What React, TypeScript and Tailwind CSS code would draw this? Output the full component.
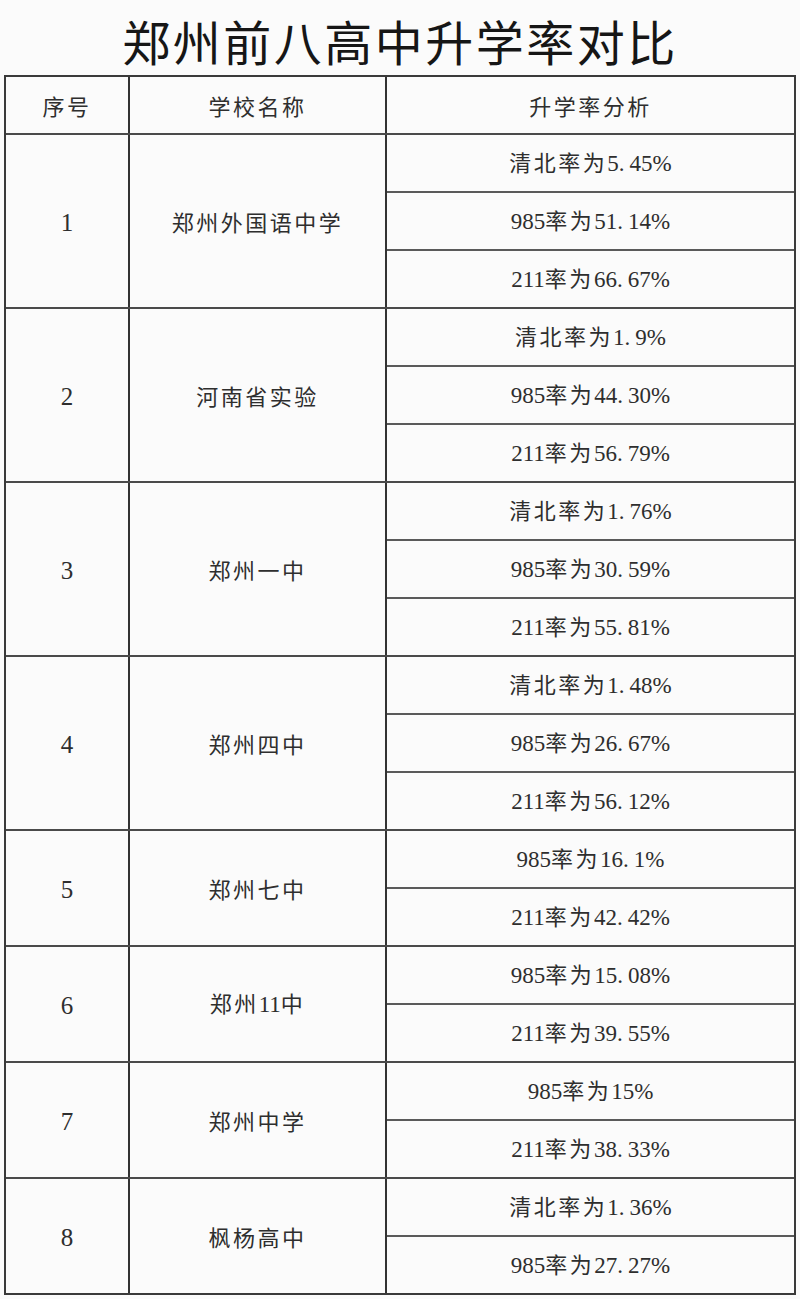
import React from "react";

type Group = { no: string; name: string; rates: string[] };

const groups: Group[] = [
  { no: "1", name: "郑州外国语中学", rates: ["清北率为5.45%", "985率为51.14%", "211率为66.67%"] },
  { no: "2", name: "河南省实验", rates: ["清北率为1.9%", "985率为44.30%", "211率为56.79%"] },
  { no: "3", name: "郑州一中", rates: ["清北率为1.76%", "985率为30.59%", "211率为55.81%"] },
  { no: "4", name: "郑州四中", rates: ["清北率为1.48%", "985率为26.67%", "211率为56.12%"] },
  { no: "5", name: "郑州七中", rates: ["985率为16.1%", "211率为42.42%"] },
  { no: "6", name: "郑州11中", rates: ["985率为15.08%", "211率为39.55%"] },
  { no: "7", name: "郑州中学", rates: ["985率为15%", "211率为38.33%"] },
  { no: "8", name: "枫杨高中", rates: ["清北率为1.36%", "985率为27.27%"] },
];

function Txt({ text }: { text: string }) {
  const parts = text.split(/([\u4e00-\u9fff]+)/).filter((p) => p.length > 0);
  return (
    <span className="whitespace-nowrap">
      {parts.map((p, i) => {
        if (/[\u4e00-\u9fff]/.test(p)) {
          return (
            <span key={i} className="tracking-[2.5px]">
              {p}
            </span>
          );
        }
        const segs = p.split(".");
        return (
          <span key={i} className="font-['Liberation_Serif',serif] text-[23px]">
            {segs.map((s, j) => (
              <React.Fragment key={j}>
                {j > 0 && <span className="pr-[5px]">.</span>}
                {s}
              </React.Fragment>
            ))}
          </span>
        );
      })}
    </span>
  );
}

export default function App() {
  return (
    <div className="w-[800px] h-[1299px] bg-[#fbfbfb] text-[#2e2e2e] font-['Noto_Sans_CJK_SC',sans-serif] overflow-hidden">
      <div className="h-[75px] flex items-center justify-center">
        <h1 className="text-[48px] leading-none tracking-[2.5px] text-[#161616] font-normal pt-[4px]">
          郑州前八高中升学率对比
        </h1>
      </div>
      <div className="ml-[4px] w-[792px] border-2 border-[#3a3a3a]">
        <div className="flex h-[58px] border-b-2 border-[#4a4a4a] text-[22px]">
          <div className="w-[124px] border-r-2 border-[#333] flex items-center justify-center">
            <Txt text="序号" />
          </div>
          <div className="w-[257px] border-r-2 border-[#333] flex items-center justify-center">
            <Txt text="学校名称" />
          </div>
          <div className="flex-1 flex items-center justify-center">
            <Txt text="升学率分析" />
          </div>
        </div>
        {groups.map((g, gi) => (
          <div
            key={g.no}
            className={`flex text-[22px] ${gi < groups.length - 1 ? "border-b-2 border-[#4a4a4a]" : ""}`}
          >
            <div className="w-[124px] border-r-2 border-[#333] flex items-center justify-center font-['Liberation_Serif',serif] text-[25px] pt-[3px]">
              {g.no}
            </div>
            <div className="w-[257px] border-r-2 border-[#333] flex items-center justify-center">
              <Txt text={g.name} />
            </div>
            <div className="flex-1 flex flex-col">
              {g.rates.map((r, ri) => (
                <div
                  key={r}
                  className={`flex items-center justify-center ${
                    ri < g.rates.length - 1 ? "h-[58px] border-b-2 border-[#5a5a5a]" : "h-[56px]"
                  }`}
                >
                  <Txt text={r} />
                </div>
              ))}
            </div>
          </div>
        ))}
      </div>
    </div>
  );
}
